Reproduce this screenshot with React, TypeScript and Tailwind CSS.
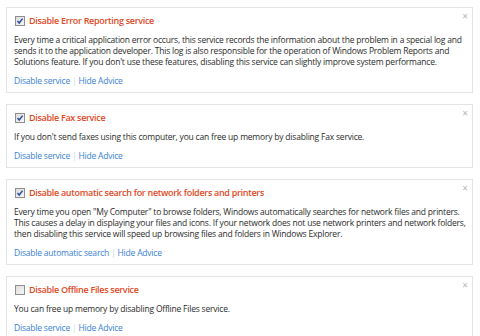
import React from 'react'

interface Advice {
  title: string
  checked: boolean
  lines: string[]
  action: string
}

const items: Advice[] = [
  {
    title: 'Disable Error Reporting service',
    checked: true,
    lines: [
      'Every time a critical application error occurs, this service records the information about the problem in a special log and',
      'sends it to the application developer. This log is also responsible for the operation of Windows Problem Reports and',
      "Solutions feature. If you don't use these features, disabling this service can slightly improve system performance.",
    ],
    action: 'Disable service',
  },
  {
    title: 'Disable Fax service',
    checked: true,
    lines: ["If you don't send faxes using this computer, you can free up memory by disabling Fax service."],
    action: 'Disable service',
  },
  {
    title: 'Disable automatic search for network folders and printers',
    checked: true,
    lines: [
      'Every time you open "My Computer" to browse folders, Windows automatically searches for network files and printers.',
      'This causes a delay in displaying your files and icons. If your network does not use network printers and network folders,',
      'then disabling this service will speed up browsing files and folders in Windows Explorer.',
    ],
    action: 'Disable automatic search',
  },
  {
    title: 'Disable Offline Files service',
    checked: false,
    lines: ['You can free up memory by disabling Offline Files service.'],
    action: 'Disable service',
  },
]

function CheckBox({ checked }: { checked: boolean }) {
  return (
    <svg width="10" height="10" viewBox="0 0 10 10" className="shrink-0">
      <defs>
        <linearGradient id="cbg" x1="0" y1="0" x2="1" y2="1">
          <stop offset="0" stopColor="#dcdcdc" />
          <stop offset="1" stopColor="#f7f7f7" />
        </linearGradient>
      </defs>
      <rect x="0.5" y="0.5" width="9" height="9" fill="url(#cbg)" stroke="#8e8f8f" />
      {checked && <path d="M2.5 5 L4.2 7 L7.6 2.6" fill="none" stroke="#2d4f9e" strokeWidth="1.5" />}
    </svg>
  )
}

function AdviceCard({ item }: { item: Advice }) {
  return (
    <div className="relative min-w-0 overflow-hidden border border-[#e4e4e4] bg-white px-[7px] pt-[7px] pb-[6px]">
      <span className="absolute right-[4px] top-[3px] text-[10px] leading-none text-[#b5b5b5]">×</span>
      <div className="flex h-[12px] items-center gap-[4px] pl-[1px]">
        <CheckBox checked={item.checked} />
        <span className="font-semibold tracking-[-0.3px] text-[#df4a1f] text-[9px] leading-[12px]">{item.title}</span>
      </div>
      <div className="mt-[7px] text-[#2b2b2b] text-[8.5px] leading-[11px] tracking-[-0.2px] whitespace-nowrap">
        {item.lines.map((l, i) => (
          <div key={i}>{l}</div>
        ))}
      </div>
      <div className="mt-[8px] text-[8.5px] leading-[11px] tracking-[-0.2px] text-[#3a7fd5]">
        {item.action}
        <span className="mx-[2px] text-[#c8d6e6]">|</span>
        Hide Advice
      </div>
    </div>
  )
}

export default function App() {
  return (
    <div
      className="h-[336px] w-[480px] overflow-hidden bg-white pl-[6px] pr-[7px] pt-[7px]"
      style={{ fontFamily: '"Open Sans", sans-serif' }}
    >
      <div className="flex flex-col gap-[11px]">
        {items.map((it) => (
          <AdviceCard key={it.title} item={it} />
        ))}
      </div>
    </div>
  )
}
